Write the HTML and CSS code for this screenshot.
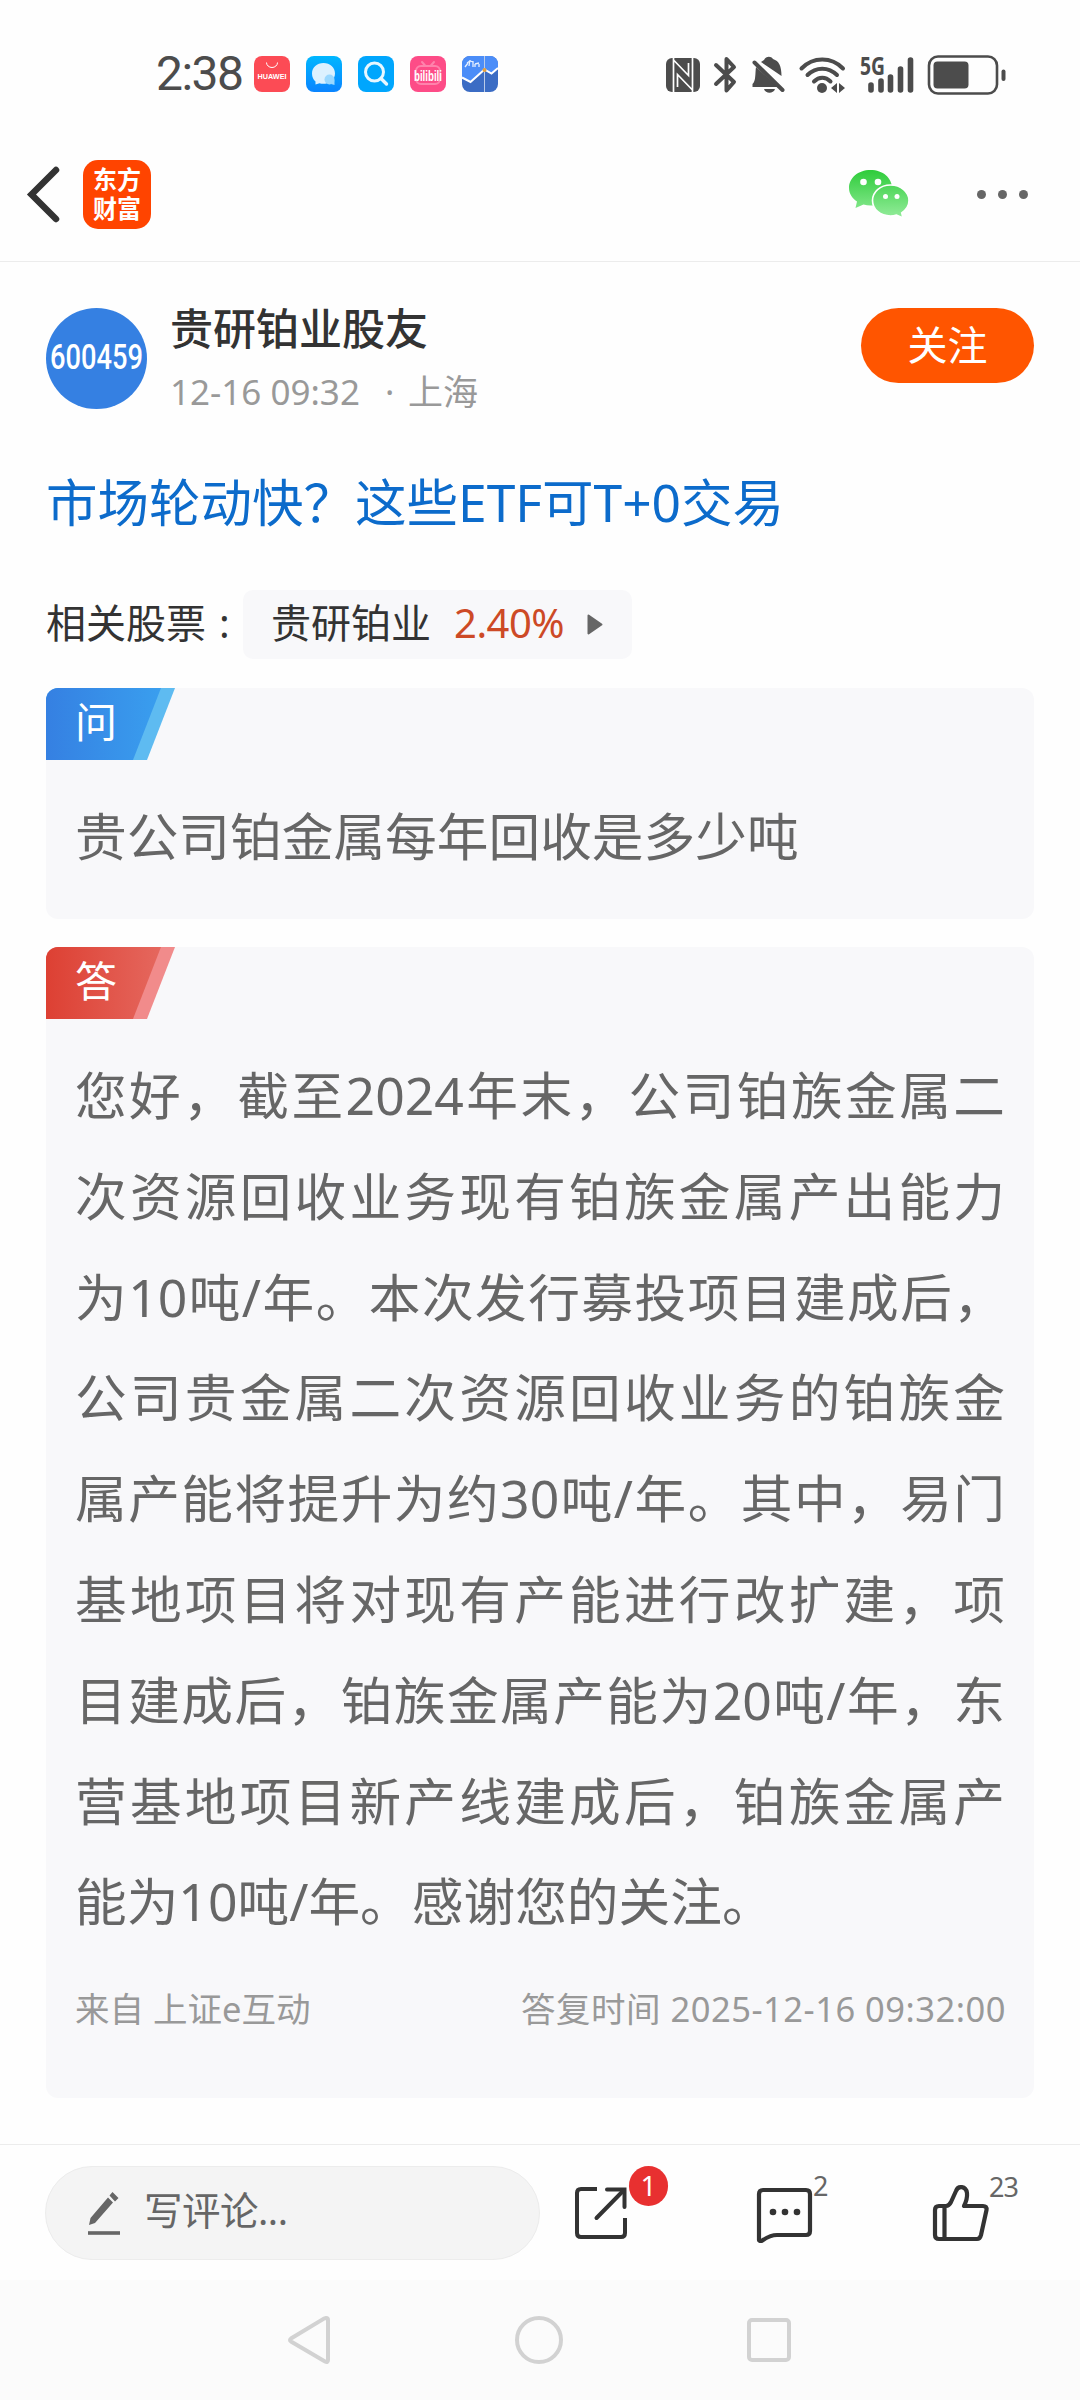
FILE: index.html
```
<!DOCTYPE html>
<html lang="zh-CN">
<head>
    <meta charset="UTF-8">
    <meta name="viewport" content="width=device-width, initial-scale=1.0">
    <title>市场轮动快？这些ETF可T+0交易</title>
    <link rel="stylesheet" href="styles.css">
</head>
<body>
    <div class="screen">
        <div class="status-bar">
            <span class="time">2:38</span>
            <div class="apps">
                <svg width="36" height="36" viewBox="0 0 36 36">
                    <rect width="36" height="36" rx="8" fill="#fc4b55"/>
                    <path d="M12.500 6.500a5.500 5 0 0 0 11 0" fill="none" stroke="#fff" stroke-width="1"/>
                    <text x="3.500" y="23" class="huawei" textLength="29" lengthAdjust="spacingAndGlyphs">HUAWEI</text>
                </svg>
                <svg width="36" height="36" viewBox="0 0 36 36">
                    <defs>
                        <linearGradient id="chat" x1="0" y1="0" x2="0" y2="1">
                            <stop offset="0" stop-color="#00b7ff"/>
                            <stop offset="1" stop-color="#0a84ff"/>
                        </linearGradient>
                    </defs>
                    <rect width="36" height="36" rx="8" fill="url(#chat)"/>
                    <path d="M17.500 7C11 7 6 11.500 6 17.500c0 3.500 1.300 6 3.500 8v3l4-1.200c7 2 15.500-2 15.500-9.800C29 11.500 24 7 17.500 7z" fill="#dcf1ff"/>
                    <circle cx="23.500" cy="23.500" r="5" fill="#9ad8ff"/>
                    <path d="M25 28l3.500 1v-5z" fill="#9ad8ff"/>
                </svg>
                <svg width="36" height="36" viewBox="0 0 36 36">
                    <rect width="36" height="36" rx="8" fill="#00a6fd"/>
                    <circle cx="16.500" cy="16" r="9" fill="none" stroke="#e8f7ff" stroke-width="3"/>
                    <path d="M23 22.500l5.500 5.500" stroke="#e8f7ff" stroke-width="3.400" stroke-linecap="round"/>
                </svg>
                <svg width="36" height="36" viewBox="0 0 36 36">
                    <rect width="36" height="36" rx="8" fill="#fd4c87"/>
                    <g fill="none" stroke="#fe83ac" stroke-width="2" stroke-linecap="round">
                        <rect x="6" y="10" width="24" height="18" rx="5"/>
                        <path d="M12 6l3.500 4M24 6l-3.500 4"/>
                    </g>
                    <text x="4" y="24.500" class="bili" textLength="28" lengthAdjust="spacingAndGlyphs">bilibili</text>
                </svg>
                <svg width="36" height="36" viewBox="0 0 36 36">
                    <rect width="36" height="36" rx="8" fill="#3b6cc4"/>
                    <path d="M0 21V8a8 8 0 0 1 8-8h20a8 8 0 0 1 8 8v4l-7 6-6.500-4L9 26z" fill="#4b8df8"/>
                    <path d="M0 21.500l8.500 4.500L22.500 13.500l7 4L36 12" fill="none" stroke="#fff" stroke-width="2"/>
                    <path d="M22.500 0v36" stroke="#b9cbe8" stroke-width="1"/>
                    <circle cx="22.500" cy="14" r="2" fill="#e8a13a"/>
                    <path d="M3 11l3-4M5 7l3-2 3 1M7 10l1-6M11 11V5M13 8l4-1M13 11v-3M17 11V8" stroke="#e6f0ff" stroke-width="1.300" fill="none"/>
                </svg>
            </div>
            <div class="system">
                <svg width="340" height="44" viewBox="0 0 340 44">
                    <!-- nfc -->
                    <rect x="0" y="6" width="34" height="34" rx="6" fill="#4c4c4c"/>
                    <path d="M7.500 6v34M26.500 6v34M8 8.500l14.500 15V11M26 37.500l-14.500-15V35" fill="none" stroke="#fff" stroke-width="1.700"/>
                    <!-- bluetooth -->
                    <path d="M50 13l18 17-7.500 8.500V7L68 15 50 32" fill="none" stroke="#4c4c4c" stroke-width="4" stroke-linejoin="round" stroke-linecap="round"/>
                    <!-- muted bell -->
                    <path d="M98 8c2-4 7-4 9-1 6 2 8.500 7 8.500 17L95 10zM90 15l22 20H86.500v-3C90 29 89 22 90 15zM98 37h11c-1.500 5-9.500 5-11 0z" fill="#4c4c4c"/>
                    <path d="M88.500 10.500l28 27.500" stroke="#4c4c4c" stroke-width="4" stroke-linecap="round"/>
                    <!-- wifi -->
                    <path d="M135.500 16.500c11.500-12 30-12 41.500 0M141.500 23c8.500-8.500 21-8.500 29.500 0M148 29.500c5-5 11.500-5 16.500 0" fill="none" stroke="#4c4c4c" stroke-width="4" stroke-linecap="round"/>
                    <circle cx="156" cy="36" r="5" fill="#4c4c4c"/>
                    <path d="M165 36l6-5v10zM179 36l-6-5v10z" fill="#4c4c4c"/>
                    <!-- signal -->
                    <text x="194" y="23" class="net" textLength="25" lengthAdjust="spacingAndGlyphs">5G</text>
                    <path d="M205 33v5M215 29v9M224.500 25v13M234.500 17v21M244.500 8v30" stroke="#4c4c4c" stroke-width="5.600" stroke-linecap="round"/>
                    <!-- battery -->
                    <rect x="263" y="4.500" width="68" height="37" rx="9" fill="none" stroke="#4c4c4c" stroke-width="2.600"/>
                    <rect x="267.500" y="9.500" width="35" height="27" rx="4" fill="#4c4c4c"/>
                    <rect x="335.500" y="17.500" width="4" height="11.500" rx="2" fill="#4c4c4c"/>
                </svg>
            </div>
        </div>

        <header class="nav">
            <svg class="back" width="34" height="58" viewBox="0 0 34 58">
                <path d="M29 4L4.500 28.500 29 53" fill="none" stroke="#333" stroke-width="6.500" stroke-linecap="round"/>
            </svg>
            <svg class="logo" width="68" height="69" viewBox="0 0 68 69">
                <rect width="68" height="69" rx="15" fill="#ff4400"/>
                <text x="10" y="29" textLength="48" lengthAdjust="spacingAndGlyphs">东方</text>
                <text x="10" y="58" textLength="48" lengthAdjust="spacingAndGlyphs">财富</text>
            </svg>
            <svg class="wechat" width="62" height="50" viewBox="0 0 62 50">
                <defs>
                    <linearGradient id="wx" gradientUnits="userSpaceOnUse" x1="0" y1="0" x2="0" y2="48">
                        <stop offset="0" stop-color="#2ecc3a"/>
                        <stop offset="1" stop-color="#94ec9b"/>
                    </linearGradient>
                </defs>
                <path d="M21.500 0C9 0 0 8 0 18c0 5.500 3 10 8 13.500L6.500 38l8-3.500c2.300.7 4.500 1 7 1C34 35.500 43 28 43 18S34 0 21.500 0z" fill="url(#wx)"/>
                <path d="M41.500 15C31 15 23.500 22 23.500 30.500S31 46 41.500 46c2.200 0 4-.3 6-.9l6.500 3-1.300-5.300c4.500-3 7.300-7.300 7.300-12.300C60 22 52 15 41.500 15z" fill="url(#wx)" stroke="#fff" stroke-width="1.600"/>
                <g fill="#fff">
                    <circle cx="14.500" cy="12" r="3.300"/>
                    <circle cx="29" cy="12" r="3.300"/>
                    <circle cx="36.500" cy="26.500" r="2.500"/>
                    <circle cx="48" cy="26.500" r="2.500"/>
                </g>
            </svg>
            <div class="more"><i></i><i></i><i></i></div>
        </header>

        <main class="content">
            <section class="author">
                <svg class="avatar" width="101" height="101" viewBox="0 0 101 101">
                    <circle cx="50.500" cy="50.500" r="50.500" fill="#3580e2"/>
                    <text x="4" y="61" textLength="93" lengthAdjust="spacingAndGlyphs">600459</text>
                </svg>
                <div class="author-info">
                    <div class="name">贵研铂业股友</div>
                    <div class="meta"><span class="date">12-16 09:32</span><span class="dot">·</span><span>上海</span></div>
                </div>
                <button class="follow">关注</button>
            </section>

            <h1 class="title">市场轮动快？这些ETF可T+0交易</h1>

            <section class="stocks">
                <span class="label">相关股票<span class="colon">:</span></span>
                <a class="chip">
                    <span>贵研铂业</span>
                    <span class="rise">2.40%</span>
                    <svg width="16" height="21" viewBox="0 0 16 21"><path d="M1.500 1.500L14.500 10.500 1.500 19.500z" fill="#666" stroke="#666" stroke-width="2" stroke-linejoin="round"/></svg>
                </a>
            </section>

            <section class="card question">
                <div class="tag tag-ask"><span>问</span></div>
                <p class="text">贵公司铂金属每年回收是多少吨</p>
            </section>

            <section class="card answer">
                <div class="tag tag-reply"><span>答</span></div>
                <p class="text">您好，截至2024年末，公司铂族金属二次资源回收业务现有铂族金属产出能力为10吨/年。本次发行募投项目建成后，公司贵金属二次资源回收业务的铂族金属产能将提升为约30吨/年。其中，易门基地项目将对现有产能进行改扩建，项目建成后，铂族金属产能为20吨/年，东营基地项目新产线建成后，铂族金属产能为10吨/年。感谢您的关注。</p>
                <div class="source">
                    <span class="from">来自 上证e互动</span>
                    <span class="when">答复时间 2025-12-16 09:32:00</span>
                </div>
            </section>
        </main>

        <footer class="toolbar">
            <div class="comment-box">
                <svg width="33" height="44" viewBox="0 0 33 44">
                    <path d="M1 34l1.500-7L20 6.500l5 5L7 32zM21.500 4.500L24.500 1l6 6-3.500 3.500z" fill="#666"/>
                    <path d="M0 42h32" stroke="#666" stroke-width="3.600"/>
                </svg>
                <span class="placeholder">写评论...</span>
            </div>
            <div class="action share">
                <svg width="54" height="54" viewBox="0 0 54 54">
                    <g fill="none" stroke="#333" stroke-width="4">
                        <path d="M22 3H6q-4 0-4 4v40q0 4 4 4h40q4 0 4-4V32"/>
                        <path d="M32 3.500h17.500V21" stroke-linecap="round"/>
                        <path d="M48 5L21.500 32" stroke-linecap="round"/>
                    </g>
                </svg>
                <span class="badge">1</span>
            </div>
            <div class="action replies">
                <svg width="56" height="56" viewBox="0 0 56 56">
                    <path d="M6 3h43q4 0 4 4v37q0 4-4 4H20c-7 0-11 3-15.500 6q-2.500 0-2.500-1V7q0-4 4-4z" fill="none" stroke="#333" stroke-width="4.200"/>
                    <circle cx="16" cy="25" r="3.300" fill="#333"/>
                    <circle cx="28" cy="25" r="3.300" fill="#333"/>
                    <circle cx="40" cy="25" r="3.300" fill="#333"/>
                </svg>
                <span class="count">2</span>
            </div>
            <div class="action like">
                <svg width="56" height="58" viewBox="0 0 56 58">
                    <path d="M6 22h7c3 0 4-2 5-4l5-11c2-6 10-5 11 2 .5 5-1 9-3 13h19q4 0 3.500 4L48 51q-1 4-4 4H6q-4 0-4-4V26q0-4 4-4zM11.500 22v33" fill="none" stroke="#333" stroke-width="4.200" stroke-linejoin="round"/>
                </svg>
                <span class="count">23</span>
            </div>
        </footer>

        <div class="system-nav">
            <svg width="44" height="50" viewBox="0 0 44 50"><path d="M39 3q2 0 2 2v40q0 3-3 1.500L4 26.500q-2-1.500 0-3L37 3.500z" fill="none" stroke="#d2d2d2" stroke-width="4"/></svg>
            <svg width="48" height="48" viewBox="0 0 48 48"><circle cx="24" cy="24" r="22" fill="none" stroke="#d2d2d2" stroke-width="4"/></svg>
            <svg width="44" height="44" viewBox="0 0 44 44"><rect x="2" y="2" width="40" height="40" rx="3" fill="none" stroke="#d2d2d2" stroke-width="4"/></svg>
        </div>
    </div>
</body>
</html>
```
FILE: styles.css
```
* {
    margin: 0;
    padding: 0;
    box-sizing: border-box;
}

body {
    width: 1080px;
    background: #fefefe;
    color: #333;
    font-family: "Noto Sans", "Noto Sans CJK SC", sans-serif;
    text-spacing-trim: space-all;
}

svg {
    display: block;
    flex: none;
    overflow: visible;
}

.screen {
    width: 1080px;
    height: 2400px;
    display: flex;
    flex-direction: column;
    overflow: hidden;
}

/* status bar */
.status-bar {
    height: 128px;
    padding: 20px 74px 0 156px;
    display: flex;
    align-items: center;
}

.time {
    width: 98px;
    font-family: Roboto, sans-serif;
    font-size: 48px;
    line-height: 50px;
    letter-spacing: -1.500px;
    color: #4c4c4c;
}

.apps {
    display: flex;
    gap: 16px;
}

.huawei {
    font: 700 7px "Liberation Sans", sans-serif;
    fill: #fff;
}

.bili {
    font: 700 14px "Liberation Sans", sans-serif;
    fill: #fff;
}

.system {
    margin-left: auto;
}

.net {
    font: 700 25px "Noto Sans", sans-serif;
    fill: #4c4c4c;
}

/* header */
.nav {
    height: 134px;
    padding: 0 52px 0 27px;
    display: flex;
    align-items: center;
    border-bottom: 1px solid #ececec;
}

.logo {
    margin-left: 22px;
}

.logo text {
    font-size: 25px;
    font-weight: 700;
    fill: #fff;
}

.wechat {
    margin-left: auto;
}

.more {
    margin-left: 66px;
    display: flex;
    gap: 12px;
}

.more i {
    width: 9px;
    height: 9px;
    border-radius: 50%;
    background: #666;
}

/* post */
.content {
    flex: 1;
    padding: 46px 46px 0;
}

.author {
    height: 101px;
    display: flex;
    align-items: flex-start;
}

.avatar text {
    font-family: Roboto, sans-serif;
    font-size: 35px;
    font-weight: 500;
    fill: #fff;
}

.author-info {
    flex: 1;
    margin-left: 23px;
}

.name {
    margin-top: -9px;
    font-size: 43px;
    line-height: 60px;
    font-weight: 500;
}

.meta {
    display: flex;
    font-size: 35px;
    line-height: 50px;
    margin-top: 8px;
    color: #999;
}

.date {
    width: 215px;
}

.dot {
    width: 23px;
}

.follow {
    width: 173px;
    height: 75px;
    border: none;
    border-radius: 38px;
    background: #ff5500;
    color: #fff;
    font-family: inherit;
    font-size: 40px;
    line-height: 73px;
    padding-bottom: 2px;
}

.title {
    margin-top: 53px;
    font-size: 51.500px;
    line-height: 80px;
    font-weight: 400;
    color: #0c6bcb;
}

.stocks {
    margin-top: 48px;
    display: flex;
    align-items: center;
    font-size: 40px;
    line-height: 65px;
}

.label {
    width: 197px;
    padding-bottom: 4px;
}

.colon {
    margin-left: 13px;
}

.chip {
    width: 389px;
    height: 69px;
    padding: 0 28px 0 28px;
    display: flex;
    align-items: center;
    background: #f8f8fa;
    border-radius: 10px;
}

.chip span {
    padding-bottom: 4px;
}

.chip svg {
    margin-left: auto;
    margin-right: 1px;
}

.rise {
    margin-left: 23px;
    letter-spacing: -0.500px;
    color: #cd4a26;
}

.card {
    margin-top: 29px;
    background: #f8f8fa;
    border-radius: 12px;
    overflow: hidden;
}

.tag {
    width: 129px;
    height: 72px;
    color: #fff;
    font-size: 42px;
    line-height: 68px;
    clip-path: polygon(0 0, 100% 0, 101px 100%, 0 100%);
}

.tag span {
    display: block;
    height: 72px;
    padding-left: 29px;
    clip-path: polygon(0 0, 115px 0, 87px 100%, 0 100%);
}

.tag-ask {
    background: #5ebbf1;
}

.tag-ask span {
    background: linear-gradient(90deg, #3580e2, #3aa2f0);
}

.tag-reply {
    background: #f18b8b;
}

.tag-reply span {
    background: linear-gradient(90deg, #dd4033, #e66c63);
}

.text {
    margin-top: 26px;
    padding: 0 29px;
    font-size: 51.700px;
    line-height: 100.800px;
    color: #666;
    text-align: justify;
}

.question {
    height: 231px;
}

.answer {
    height: 1151px;
    margin-top: 28px;
}

.source {
    margin-top: 32px;
    padding: 0 28px 0 29px;
    display: flex;
    justify-content: space-between;
    font-size: 34.500px;
    line-height: 50px;
    color: #999;
}

.when {
    letter-spacing: 0.500px;
}

/* bottom toolbar */
.toolbar {
    height: 136px;
    padding-left: 45px;
    display: flex;
    align-items: center;
    border-top: 1px solid #ececec;
}

.comment-box {
    width: 495px;
    height: 94px;
    padding-left: 42px;
    display: flex;
    align-items: center;
    gap: 23px;
    border: 1px solid #ececec;
    border-radius: 47px;
    background: #f4f4f4;
    font-size: 38.500px;
    line-height: 56px;
    color: #666;
}

.placeholder {
    padding-bottom: 5px;
    letter-spacing: -0.500px;
}

.action {
    position: relative;
}

.share {
    margin-left: 35px;
}

.replies {
    margin-left: 128px;
    padding-top: 4px;
}

.like {
    margin-left: 120px;
}

.badge {
    position: absolute;
    left: 54px;
    top: -20px;
    width: 39px;
    height: 40px;
    border-radius: 20px;
    background: #e83030;
    color: #fff;
    font-size: 28px;
    line-height: 38px;
    text-align: center;
}

.count {
    position: absolute;
    left: 100%;
    top: -15px;
    font-size: 27px;
    line-height: 36px;
    letter-spacing: -1px;
    color: #666;
}

/* android buttons */
.system-nav {
    height: 120px;
    padding-left: 287px;
    display: flex;
    gap: 184px;
    align-items: center;
    background: #fbfbfb;
}
```
